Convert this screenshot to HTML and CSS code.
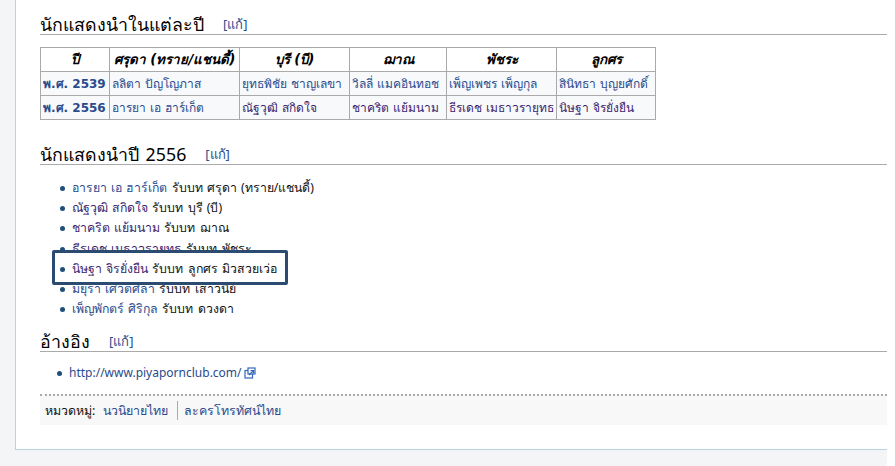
FILE: index.html
```html
<!DOCTYPE html>
<html lang="th">
<head>
<meta charset="utf-8">
<title>นักแสดงนำ</title>
<link rel="stylesheet" href="styles.css">
</head>
<body>
<div class="page">
  <main class="content">
    <h2 class="heading"><span>นักแสดงนำในแต่ละปี</span><a class="edit">[แก้]</a></h2>
    <table class="awards">
      <colgroup><col class="c1"><col class="c2"><col class="c3"><col class="c4"><col class="c5"><col class="c6"></colgroup>
      <thead>
        <tr><th>ปี</th><th>ศรุดา (ทราย/แชนดี้)</th><th>บุรี (บี)</th><th>ฌาณ</th><th>พัชระ</th><th>ลูกศร</th></tr>
      </thead>
      <tbody>
        <tr><td><a class="year">พ.ศ. 2539</a></td><td><a>ลลิตา ปัญโญภาส</a></td><td><a>ยุทธพิชัย ชาญเลขา</a></td><td><a>วิลลี่ แมคอินทอช</a></td><td><a>เพ็ญเพชร เพ็ญกุล</a></td><td><a>สินิทธา บุญยศักดิ์</a></td></tr>
        <tr><td><a class="year">พ.ศ. 2556</a></td><td><a>อารยา เอ ฮาร์เก็ต</a></td><td><a class="visited">ณัฐวุฒิ สกิดใจ</a></td><td><a class="visited">ชาคริต แย้มนาม</a></td><td><a class="visited">ธีรเดช เมธาวรายุทธ</a></td><td><a class="visited">นิษฐา จิรยั่งยืน</a></td></tr>
      </tbody>
    </table>
    <h2 class="heading second"><span>นักแสดงนำปี 2556</span><a class="edit">[แก้]</a></h2>
    <ul class="cast">
      <li><a>อารยา เอ ฮาร์เก็ต</a> รับบท ศรุดา (ทราย/แชนดี้)</li>
      <li><a class="visited">ณัฐวุฒิ สกิดใจ</a> รับบท บุรี (บี)</li>
      <li><a class="visited">ชาคริต แย้มนาม</a> รับบท ฌาณ</li>
      <li><a class="visited">ธีรเดช เมธาวรายุทธ</a> รับบท พัชระ</li>
      <li><a class="visited">นิษฐา จิรยั่งยืน</a> รับบท ลูกศร มิวสวยเว่อ</li>
      <li><a>มยุรา เศวตศิลา</a> รับบท เสาวนีย์</li>
      <li><a>เพ็ญพักตร์ ศิริกุล</a> รับบท ดวงดา</li>
    </ul>
    <h2 class="heading third"><span>อ้างอิง</span><a class="edit">[แก้]</a></h2>
    <ul class="refs">
      <li><a>http://www.piyapornclub.com/</a><svg class="ext" viewBox="0 0 12 12" width="12" height="12" aria-hidden="true"><rect x="1" y="3.5" width="7.5" height="7.5" fill="none" stroke="#36b" stroke-width="1.2"/><rect x="4" y="1" width="7" height="6" fill="#fff" stroke="#36b" stroke-width="1.2"/><path d="M5 8 L9 4 M6.5 3.5 H9.5 V6.5" fill="none" stroke="#36b" stroke-width="1.2"/></svg></li>
    </ul>
    <div class="cats"><span class="cats-label">หมวดหมู่:</span><a>นวนิยายไทย</a><a class="sep">ละครโทรทัศน์ไทย</a></div>
    <div class="callout"><ul class="cast callout-list"><li><a class="visited">นิษฐา จิรยั่งยืน</a> รับบท ลูกศร มิวสวยเว่อ</li></ul></div>
  </main>
</div>
</body>
</html>
```
FILE: styles.css
```css
* { box-sizing: border-box; }
html, body { margin: 0; padding: 0; background: #fff; }
body { width: 895px; height: 466px; overflow: hidden; font-family: "Noto Sans", "DejaVu Sans", sans-serif; font-size: 12.3px; color: #111; word-spacing: 1px; }
.page { width: 887px; height: 466px; background: #f4f5f6; padding-left: 15px; }
.content { position: relative; height: 450px; background: #fff; border-left: 1px solid #b9d3e2; border-bottom: 1px solid #b9d3e2; padding: 13px 0 0 24px; }
a { color: #2a4b8d; text-decoration: none; }
a.visited { color: #3a1f6e; }
.heading { display: flex; align-items: baseline; margin: 0; height: 22px; font-weight: 400; font-size: 17.8px; line-height: 22px; color: #000; border-bottom: 1px solid #aaa; word-spacing: 2px; }
.heading.second { margin-top: 23px; }
.heading.third { margin-top: 11px; }
.edit { align-self: flex-start; font-size: 13px; line-height: 22px; margin-left: 19px; }
.awards { table-layout: fixed; width: 615px; margin-top: 12px; border-collapse: collapse; font-size: 12px; }
.c1 { width: 69px; } .c2 { width: 130px; } .c3 { width: 110px; } .c4 { width: 97px; } .c5 { width: 110px; } .c6 { width: 99px; }
.awards th, .awards td { border: 1px solid #aaa; height: 24px; padding: 0 2px; white-space: nowrap; overflow: hidden; }
.awards th { background: #fff; font-family: "DejaVu Sans", "Noto Sans", sans-serif; font-size: 13.4px; font-style: italic; font-weight: 700; text-align: center; color: #000; word-spacing: 0; }
.awards td { background: #f8f9fb; }
.year { font-family: "DejaVu Sans", "Noto Sans", sans-serif; font-weight: 700; word-spacing: 0; }
.cast { list-style: none; margin: 13px 0 0 0; padding: 0; }
.cast li, .refs li { position: relative; height: 20.2px; line-height: 20px; padding-left: 32px; white-space: nowrap; }
.cast li::before, .refs li::before { content: ""; position: absolute; left: 20px; top: 8px; width: 5px; height: 5px; border-radius: 50%; background: #1f4f78; }
.refs { list-style: none; margin: 11px 0 0; padding: 0; }
.refs li { padding-left: 29px; height: 20px; font-size: 12px; }
.refs li::before { left: 17px; }
.ext { vertical-align: -2px; margin-left: 2px; }
.cats { display: flex; align-items: center; height: 31px; margin-top: 11px; border-top: 2px dotted #aaa; background: #f8f8f8; padding-left: 5px; font-size: 12.4px; }
.cats-label { margin-right: 8px; }
.sep { border-left: 1px solid #aaa; margin-left: 9px; padding-left: 6px; }
.callout { position: absolute; left: 36px; top: 250px; width: 236px; height: 35px; background: #fff; border: 3px solid #2b4c70; border-radius: 2px; }
.callout-list { margin: 6px 0 0; }
.callout-list li { padding-left: 17px; }
.callout-list li::before { left: 5px; }
```
